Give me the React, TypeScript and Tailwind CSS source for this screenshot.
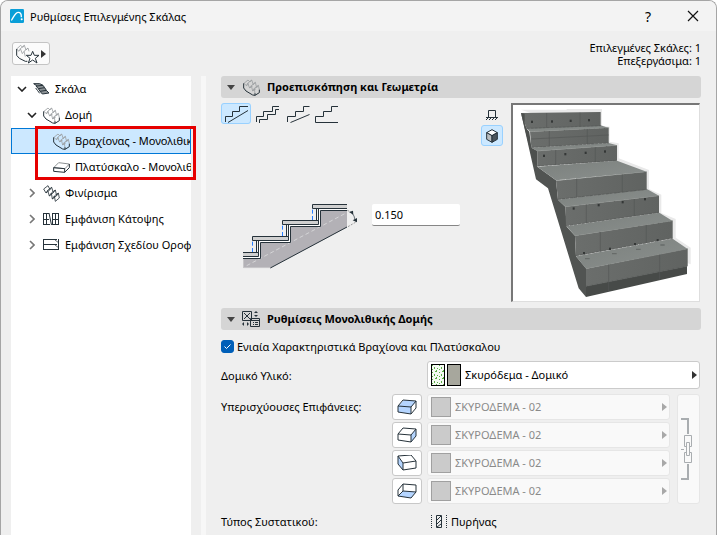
import { useState } from 'react'
import type { ReactNode } from 'react'

const ink = '#26323a'

function StairIcon() {
  return (
    <svg width="17" height="17" viewBox="0 0 51 51" fill="none" strokeWidth="3" aria-hidden="true">
      <path
        d="M3 13L10 20L14 13L20 27L25 20L29 36L34 28L36 46M15 3L21 9L26 3L31 17L37 10L41 26L46 19L49 32M3 13L15 3M14 13L26 3M25 20L37 10M34 28L46 19M10 20L18 14M20 27L29 21M29 36L39 29"
        stroke="#9b9fa1"
        strokeWidth="2.500"
      />
      <path d="M2 13V27L9 36L29 48L36 49L49 41V32M36 43V49" stroke={ink} />
    </svg>
  )
}

function StairFlatIcon() {
  return (
    <svg width="17" height="12" viewBox="0 0 51 36" fill="none" stroke={ink} strokeWidth="3" aria-hidden="true">
      <path d="M2 2L12 9L30 7L20 2ZM9 9L16 17L35 14L30 7M16 17L21 25L40 22L35 14M21 25L28 33L48 30L40 22" fill="#8d9396" />
      <path d="M8 15L14 23L20 31" />
    </svg>
  )
}

function SlabIcon() {
  return (
    <svg width="17" height="11" viewBox="0 0 51 33" fill="none" strokeWidth="3" aria-hidden="true">
      <path d="M2 17L17 2L49 6L36 20Z" stroke="#8b9092" />
      <path d="M2 17V28L35 31L49 17V6M2 17L35 20V31" stroke={ink} />
    </svg>
  )
}

function FinishIcon() {
  return (
    <svg width="17" height="17" viewBox="0 0 51 51" fill="none" stroke={ink} strokeWidth="2.500" aria-hidden="true">
      <path d="M2 12L9 24L14 16L19 33L25 24L28 42L34 33L37 49M15 2L21 14L26 7L31 23L37 15L41 32L46 24L49 39M2 12L15 2M9 24L21 14M14 16L26 7M19 33L31 23M25 24L37 15M28 42L41 32M34 33L46 24M37 49L49 39" />
    </svg>
  )
}

function PlanIcon() {
  return (
    <svg width="17" height="12" fill="none" stroke={ink} aria-hidden="true">
      <path d="M.5 0V12M3.500 0V12M12.500 0V12M15.500 0V12M0 .5H6M0 6.500H6M0 11.500H7M9 .5H16M9 6.500H16M10 11.500H16M6 0L8.500 12M9.500 0V12" />
    </svg>
  )
}

function StoreyIcon() {
  return (
    <svg width="17" height="12" fill="none" stroke={ink} aria-hidden="true">
      <path d="M.5 0V11M15.500 0V11M0 .5H14M0 5.500H14M0 10.500H16" />
      <path d="M12 1L16 4M12 6L16 9" strokeWidth=".7" />
    </svg>
  )
}

function SettingsIcon() {
  return (
    <svg width="18" height="17" fill="none" stroke={ink} aria-hidden="true">
      <path d="M.5 .5H9.500V9.500H.5ZM2 2L8 8M8 2L2 8M8.500 7.500H17.500V15.500H8.500ZM8.500 9.500H17.500M11 11.500H12M13 11.500H16M11 13.500H12M13 13.500H16" />
      <path d="M12 2L14 0L16 2ZM12 4L14 6L16 4ZM2 11L0 13L2 15ZM5 11L7 13L5 15Z" fill={ink} stroke="none" />
    </svg>
  )
}

type Node = { label: string; level: number; icon: ReactNode; state?: 'open' | 'closed'; selected?: boolean }

const indents = ['pl-[6px]', 'pl-[16px]', 'pl-[26px]']

function TreeRow({ label, level, icon, state, selected }: Node) {
  return (
    <button
      type="button"
      role="treeitem"
      aria-selected={!!selected}
      aria-expanded={state ? state === 'open' : undefined}
      className={`relative flex h-[26px] w-full items-center gap-[5px] overflow-hidden whitespace-nowrap text-left ${indents[level]} ${
        selected ? 'bg-[#cce8ff] outline-1 -outline-offset-1 outline-[#0078d7]' : ''
      }`}
    >
      <span className="flex w-[10px] shrink-0 justify-center">
        {state === 'open' && (
          <svg width="10" height="6" fill="none" stroke="#222" strokeWidth="1.600">
            <path d="M1 1L5 5L9 1" />
          </svg>
        )}
        {state === 'closed' && (
          <svg width="6" height="10" fill="none" stroke="#777" strokeWidth="1.600">
            <path d="M1 1L5 5L1 9" />
          </svg>
        )}
      </span>
      <span className="flex w-[18px] shrink-0 items-center justify-center">{icon}</span>
      <span className="pb-px">{label}</span>
    </button>
  )
}

function SectionHeader({ title, icon }: { title: string; icon: ReactNode }) {
  return (
    <h2>
      <button type="button" aria-expanded="true" className="flex h-[22px] w-full items-center rounded-[3px] bg-[#d5d5d5] pl-[6px] font-bold">
        <svg width="8" height="5" fill="#444" aria-hidden="true">
          <path d="M0 0H8L4 5Z" />
        </svg>
        <span className="ml-[6px] flex w-[20px] justify-center">{icon}</span>
        <span className="ml-[6px] pb-px">{title}</span>
      </button>
    </h2>
  )
}

const shapes = [
  { name: 'Ομαλή', d: 'M4.500 19V13.500H11.500V8.500H18.500V3.500H27M7 19.500L27 7.500' },
  { name: 'Βαθμιδωτή', d: 'M5.500 19V13.500H12.500V8.500H21.500V3.500H28M8.500 20V16.500H16.500V11.500H24.500V6.500H28' },
  { name: 'Κεκλιμένη', d: 'M6.500 19V13.500H14.500V8.500H22.500V3.500H28.500M9.500 19.500L28.500 11.500' },
  { name: 'Οριζόντια', d: 'M27 19.500H4.500V13.500H12.500V8.500H20.500V3.500H27' },
]

function SectionDrawing() {
  return (
    <svg width="115" height="65" viewBox="39 42 345 195" fill="none" aria-hidden="true" className="shrink-0">
      <path d="M39 205H91V157H181V109H271V61H351V112L121 234H39Z" fill="#b3b1b6" />
      <path d="M40 205V233H122" stroke="#d6d6d6" strokeWidth="2" />
      <path d="M121 234L351 111" stroke={ink} strokeWidth="3" />
      <path d="M50 227L350 68" stroke="#d4d4d6" strokeWidth="3" strokeDasharray="12 8" />
      <path d="M39 202H87V154H177V106H267V57H351" stroke="#fff" strokeWidth="5" />
      <path d="M39 205.500H91.500V157.500H181.500V109.500H271.500V61.500H351" stroke={ink} strokeWidth="3" />
      <g fill="#f3f3f3" stroke={ink} strokeWidth="3">
        <path d="M79.500 148.500H85.500V190.500H79.500Z" />
        <path d="M169.500 100.500H175.500V142.500H169.500Z" />
        <path d="M259.500 52.500H265.500V94.500H259.500Z" />
      </g>
      <g fill="#d0d0d0" stroke={ink} strokeWidth="3">
        <path d="M39 187.500H85.500V199.500H39" />
        <path d="M67.500 139.500H175.500V151.500H67.500Z" />
        <path d="M157.500 91.500H265.500V103.500H157.500Z" />
        <path d="M351 43.500H247.500V55.500H351" />
      </g>
      <path d="M67.500 155V187M157.500 107V139M247.500 59V91" stroke="#2a7fff" strokeWidth="3" strokeDasharray="12 7" />
      <path d="M352 61L362 66M354 110L378 96" stroke="#999" strokeWidth="3" strokeDasharray="6 4" />
      <path d="M364 66Q374 76 376 94" stroke={ink} strokeWidth="2" />
      <path d="M357 66L369 62L370 74ZM368 91L381 84L381 97Z" fill={ink} />
    </svg>
  )
}

function StairPreview() {
  return (
    <svg viewBox="129 30 558 588" className="block h-[196px] w-[186px] bg-white" role="img" aria-label="Προεπισκόπηση">
      <defs>
        <linearGradient id="tread" x1="0" y1="0" x2="1" y2="1">
          <stop offset="0" stopColor="#7b807d" />
          <stop offset="1" stopColor="#8b908e" />
        </linearGradient>
        <linearGradient id="riser" x1="0" y1="0" x2="1" y2="0">
          <stop offset="0" stopColor="#6b6e6c" />
          <stop offset="1" stopColor="#606361" />
        </linearGradient>
      </defs>
      <path d="M153 44H290V42H396V92L419 95V140L446 145V190L537 225V282L574 299V354L617 372V428L662 458V508L640 500L380 120Z" fill="#e9e9e9" />
      <path d="M153 54L172 106L184 158L202 215L258 256L264 314L286 335L290 395L315 422L318 484L348 520V606L326 580L234 280L198 253Z" fill="#515452" />
      <g fill="url(#tread)">
        <path d="M170 100L392 91L416 99L180 110Z" />
        <path d="M184 158L416 144L441 151L202 168Z" />
        <path d="M202 215L441 197L530 230L258 256Z" />
        <path d="M263 314L532 283L567 302L286 335Z" />
        <path d="M289 394L568 353L608 378L315 422Z" />
        <path d="M318 484L608 431L653 462L348 521Z" />
      </g>
      <g fill="url(#riser)">
        <path d="M153 54L392 51V93L170 101Z" />
        <path d="M180 110L416 98V144L184 158Z" />
        <path d="M202 168L441 151V197L202 214Z" />
        <path d="M258 257L530 230V284L264 314Z" />
        <path d="M286 335L567 302V353L288 393Z" />
        <path d="M315 422L608 377V430L318 483Z" />
        <path d="M348 521L653 461V514L348 574Z" />
      </g>
      <path d="M153 54L164 56V95L178 110L184 158L202 168V214L190 205Z" fill="#4d504e" />
      <path d="M348 574L651 514V537L348 606Z" fill="#474a48" />
      <path
        d="M180 110L416 98M202 168L441 151M258 257L530 230M286 335L567 302M315 422L608 377M348 521L653 461"
        stroke="#8d918e"
        strokeWidth="2"
        strokeDasharray="12 3"
      />
      <path
        d="M170 100L392 92M184 157L416 144M202 213L441 196M264 313L530 283M288 393L567 352M318 482L608 430"
        stroke="#565957"
        strokeWidth="2"
        strokeDasharray="9 3"
      />
      <path
        d="M230 54V98M330 53V95M238 108V153M352 102V148M257 165V209M376 156V201M320 251V307M457 238V292M349 328V383M493 312V363M391 411V470M529 390V444M416 508V588M569 479V554M184 132L416 120M348 574L651 514"
        stroke="#555856"
        strokeWidth="2"
      />
      <g fill="#343736">
        {[
          [186, 80], [246, 79], [302, 77], [357, 75],
          [222, 182], [286, 177], [347, 173], [405, 169],
          [311, 340], [386, 330], [458, 321], [525, 312],
          [342, 474], [420, 461], [495, 447], [563, 435],
        ].map(([x, y]) => (
          <rect key={x + '-' + y} x={x - 3} y={y - 3} width="6" height="7" />
        ))}
      </g>
      <path d="M345 491H359M426 476H440M498 463H512M571 450H584" stroke="#676b69" strokeWidth="4" />
    </svg>
  )
}

const faces = [
  {
    name: 'Άνω επιφάνεια',
    fill: 'M1 7L7 1L20 2L14 8Z M1 7L14 8V15L1 13Z',
    d: 'M1 7L6 1L19 2L14 8ZM1 7V13L14 15V8M14 15L19 9V2',
  },
  { name: 'Δεξιά επιφάνεια', fill: 'M14 8L19 2V9L14 15Z', d: 'M1 7L6 1L19 2L14 8ZM1 7V13L14 15V8M14 15L19 9V2' },
  { name: 'Αριστερή επιφάνεια', fill: 'M1 1L6 8V15L1 9Z', d: 'M1 1L14 0L19 6L6 8ZM1 1V9L6 15V8M6 15L19 13V6' },
  { name: 'Κάτω επιφάνεια', fill: 'M1 13L6 8L19 9L14 15Z', d: 'M1 13L6 8L19 9L14 15ZM1 13V7L6 1V8M6 1L19 2V9' },
]

export default function App() {
  const [shape, setShape] = useState(0)
  const [thickness, setThickness] = useState('0.150')
  const [uniform, setUniform] = useState(true)

  return (
    <div className="flex min-h-screen flex-col overflow-hidden rounded-t-lg border border-b-0 border-[#a5a5a5] bg-[#efefef] font-['Noto_Sans',sans-serif] text-[11px] leading-[13px] text-black">
      <header className="flex h-[30px] items-center bg-[#f3f3f3] pl-[9px] pr-[17px]">
        <svg width="14" height="14" viewBox="0 0 42 42" aria-hidden="true">
          <rect width="42" height="42" rx="4" fill="#0a9fd8" />
          <path d="M5 33C12 22 16 10 25 10C33 10 34 18 34 23" fill="none" stroke="#fff" strokeWidth="4" strokeLinecap="round" />
          <circle cx="35" cy="31" r="3" fill="#fff" />
        </svg>
        <h1 className="ml-[6px] flex-1">Ρυθμίσεις Επιλεγμένης Σκάλας</h1>
        <button type="button" className="w-[14px] text-[14px]">?</button>
        <button type="button" aria-label="Κλείσιμο" className="ml-[32px]">
          <svg width="12" height="12" stroke="#111" strokeWidth="1.200">
            <path d="M1 1L11 11M11 1L1 11" />
          </svg>
        </button>
      </header>

      <div className="flex h-[45px] items-center justify-between pl-[11px] pr-[15px]">
        <button type="button" aria-label="Αγαπημένα" className="flex h-[23px] w-[38px] items-center rounded-[3px] border border-[#c4c4c4] bg-[#fbfbfb] pl-[3px]">
          <svg width="24" height="20" viewBox="0 0 72 60" fill="none" strokeWidth="3" aria-hidden="true">
            <path d="M2 15L9 22L13 14L19 29L24 22L28 38M14 4L20 10L25 4L30 18L36 12L39 22M2 15L14 4M13 14L25 4M24 22L36 12" stroke="#9b9fa1" strokeWidth="2.500" />
            <path d="M2 15V34L10 43L28 52L34 52" stroke={ink} />
            <path d="M50 22L55 34H69L58 43L63 57L50 48L37 57L42 43L31 34H45Z" fill="#fff" stroke={ink} />
          </svg>
          <svg width="5" height="8" fill="#333" className="ml-[1px]">
            <path d="M0 0L5 4L0 8Z" />
          </svg>
        </button>
        <p className="text-right">
          Επιλεγμένες Σκάλες: 1<br />
          Επεξεργάσιμα: 1
        </p>
      </div>

      <div className="flex flex-1 pl-[10px] pr-[15px]">
        <nav role="tree" className="w-[180px] shrink-0 bg-white">
          <TreeRow label="Σκάλα" level={0} icon={<StairFlatIcon />} state="open" />
          <TreeRow label="Δομή" level={1} icon={<StairIcon />} state="open" />
          <div className="relative">
            <TreeRow label="Βραχίονας - Μονολιθικός" level={2} icon={<StairIcon />} selected />
            <TreeRow label="Πλατύσκαλο - Μονολιθικό" level={2} icon={<SlabIcon />} />
            <div className="pointer-events-none absolute -top-[2px] -right-[5px] bottom-0 left-[24px] border-3 border-[#e60000]" />
          </div>
          <TreeRow label="Φινίρισμα" level={1} icon={<FinishIcon />} state="closed" />
          <TreeRow label="Εμφάνιση Κάτοψης" level={1} icon={<PlanIcon />} state="closed" />
          <TreeRow label="Εμφάνιση Σχεδίου Οροφής" level={1} icon={<StoreyIcon />} state="closed" />
        </nav>
        <div className="mr-[15px] ml-[10px] w-[5px] shrink-0 bg-[#f7f7f7]" />

        <main className="min-w-0 flex-1">
          <SectionHeader title="Προεπισκόπηση και Γεωμετρία" icon={<StairIcon />} />
          <section className="flex pt-[5px] pb-[6px]">
            <div className="flex-1">
              <div className="flex">
                {shapes.map((s, i) => (
                  <button
                    key={s.name}
                    type="button"
                    aria-label={s.name}
                    aria-pressed={shape === i}
                    onClick={() => setShape(i)}
                    className={shape === i ? 'rounded-[3px] bg-[#cce8ff] outline-1 -outline-offset-1 outline-[#99d1ff]' : ''}
                  >
                    <svg width="30" height="21" fill="none" stroke={ink}>
                      <path d={s.d} />
                    </svg>
                  </button>
                ))}
              </div>
              <div className="flex items-start pt-[80px] pl-[22px]">
                <SectionDrawing />
                <input
                  aria-label="Πάχος"
                  value={thickness}
                  onChange={e => setThickness(e.target.value)}
                  className="ml-[14px] h-[22px] w-[88px] rounded-[2px] border-b border-[#868686] bg-white px-[3px]"
                />
              </div>
            </div>
            <div className="mr-[8px] flex flex-col items-center">
              <button type="button" aria-label="Όψη" className="flex h-[22px] w-[22px] items-center justify-center">
                <svg width="12" height="11" fill="none" stroke={ink}>
                  <path d="M2.500 8V1.500H9.500V8M0 8.500H12M2 9L0 11M5 9L3 11M8 9L6 11M11 9L9 11" />
                </svg>
              </button>
              <button type="button" aria-label="Τρισδιάστατη όψη" className="flex h-[21px] w-[22px] items-center justify-center rounded-[3px] border border-[#99d1ff] bg-[#cce8ff]">
                <svg width="12" height="14" viewBox="0 0 36 42" stroke={ink} strokeWidth="3" strokeLinejoin="round">
                  <path d="M18 2L34 11L18 20L2 11Z" fill="#fff" />
                  <path d="M2 11L18 20V40L2 31Z" fill="#b9bdc0" />
                  <path d="M34 11L18 20V40L34 31Z" fill="#4b555c" />
                </svg>
              </button>
            </div>
            <div className="mr-px border-2 border-r-1 border-b-1 border-t-[#777] border-r-[#dedede] border-b-[#dedede] border-l-[#777]">
              <StairPreview />
            </div>
          </section>

          <SectionHeader title="Ρυθμίσεις Μονολιθικής Δομής" icon={<SettingsIcon />} />
          <section className="flex flex-col pr-px">
            <label className="flex h-[31px] items-center pt-[2px]">
              <span className="relative flex">
                <input
                  type="checkbox"
                  checked={uniform}
                  onChange={e => setUniform(e.target.checked)}
                  className="h-[13px] w-[13px] appearance-none rounded-[3px] border border-[#005fb8] checked:bg-[#005fb8]"
                />
                {uniform && (
                  <svg width="13" height="13" fill="none" stroke="#fff" className="pointer-events-none absolute inset-0">
                    <path d="M3.500 6.500L5.500 8.500L9.500 4.500" />
                  </svg>
                )}
              </span>
              <span className="ml-[3px]">Ενιαία Χαρακτηριστικά Βραχίονα και Πλατύσκαλου</span>
            </label>

            <div className="flex items-center">
              <label htmlFor="material" className="w-[206px] shrink-0">Δομικό Υλικό:</label>
              <div className="relative flex-1">
                <select id="material" className="h-[28px] w-full appearance-none rounded-[3px] border border-[#cbcbcb] bg-white pb-[2px] pl-[37px]">
                  <option>Σκυρόδεμα - Δομικό</option>
                </select>
                <div className="pointer-events-none absolute inset-y-0 right-[3px] left-[4px] flex items-center">
                  <svg width="14" height="22">
                    <defs>
                      <pattern id="concrete" width="7" height="7" patternUnits="userSpaceOnUse">
                        <path d="M1 1H2V2H1ZM4 0H6V1H4ZM3 3H4V5H3ZM6 4H7V5H6ZM1 5H2V6H1ZM5 6H6V7H5Z" fill="#5cb046" />
                      </pattern>
                    </defs>
                    <rect x=".5" y=".5" width="13" height="21" fill="#f5fbf3" />
                    <rect x=".5" y=".5" width="13" height="21" fill="url(#concrete)" stroke="#000" />
                  </svg>
                  <span className="ml-[2px] h-[22px] w-[14px] border border-black bg-[#a7a79d]" />
                  <svg width="5" height="8" fill="#333" className="ml-auto">
                    <path d="M0 0L5 4L0 8Z" />
                  </svg>
                </div>
              </div>
            </div>

            <div className="flex pt-[5px]">
              <p className="w-[171px] shrink-0 leading-[26px]">Υπερισχύουσες Επιφάνειες:</p>
              <div className="flex flex-1 flex-col gap-[2px]">
                {faces.map(face => (
                  <div key={face.name} className="flex gap-[5px]">
                    <button type="button" aria-label={face.name} className="flex h-[26px] w-[30px] items-center justify-center rounded-[3px] border border-[#c8c8c8] bg-white">
                      <svg width="20" height="16" stroke={ink}>
                        <path d={face.fill} fill="#b5d5ff" stroke="none" />
                        <path d={face.d} fill="none" />
                      </svg>
                    </button>
                    <div className="relative flex-1">
                      <select disabled aria-label={face.name} className="h-[26px] w-full appearance-none rounded-[3px] border border-[#e6e6e6] bg-[#f9f9f9] pb-[2px] pl-[27px] text-[#8a8a8a] opacity-100">
                        <option>ΣΚΥΡΟΔΕΜΑ - 02</option>
                      </select>
                      <div className="pointer-events-none absolute inset-y-0 right-[3px] left-[4px] flex items-center justify-between">
                        <span className="h-[20px] w-[20px] border border-[#a0a0a0] bg-[#cbcbcb]" />
                        <svg width="5" height="8" fill="#a8a8a8">
                          <path d="M0 0L5 4L0 8Z" />
                        </svg>
                      </div>
                    </div>
                  </div>
                ))}
              </div>
              <button type="button" disabled aria-label="Σύνδεση επιφανειών" className="ml-[7px] flex w-[23px] items-center rounded-[3px] border border-[#e6e6e6] bg-[#f9f9f9] pl-[3px]">
                <svg width="13" height="62" fill="none" stroke="#a9adb0">
                  <path d="M0 1H7V16M0 61H7V46" strokeWidth="2" />
                  <path d="M5.500 28.500H3.500V17.500H10.500V28.500H8.500M5.500 34.500H3.500V44.500H10.500V34.500H8.500M5.500 37.500V24.500H8.500V37.500H5.500M0 31.500H3" />
                </svg>
              </button>
            </div>

            <div className="flex h-[34px] items-center">
              <span className="w-[210px] shrink-0">Τύπος Συστατικού:</span>
              <svg width="16" height="13" fill="none" stroke={ink} aria-hidden="true">
                <path d="M.5 0V13M15.500 0V13" strokeDasharray="1 1" />
                <path d="M5.500 .5H10.500V12.500H5.500ZM6 5L10 1M6 9L10 5M6 12L10 9" />
              </svg>
              <span className="ml-[4px]">Πυρήνας</span>
            </div>
          </section>
        </main>
      </div>
    </div>
  )
}
